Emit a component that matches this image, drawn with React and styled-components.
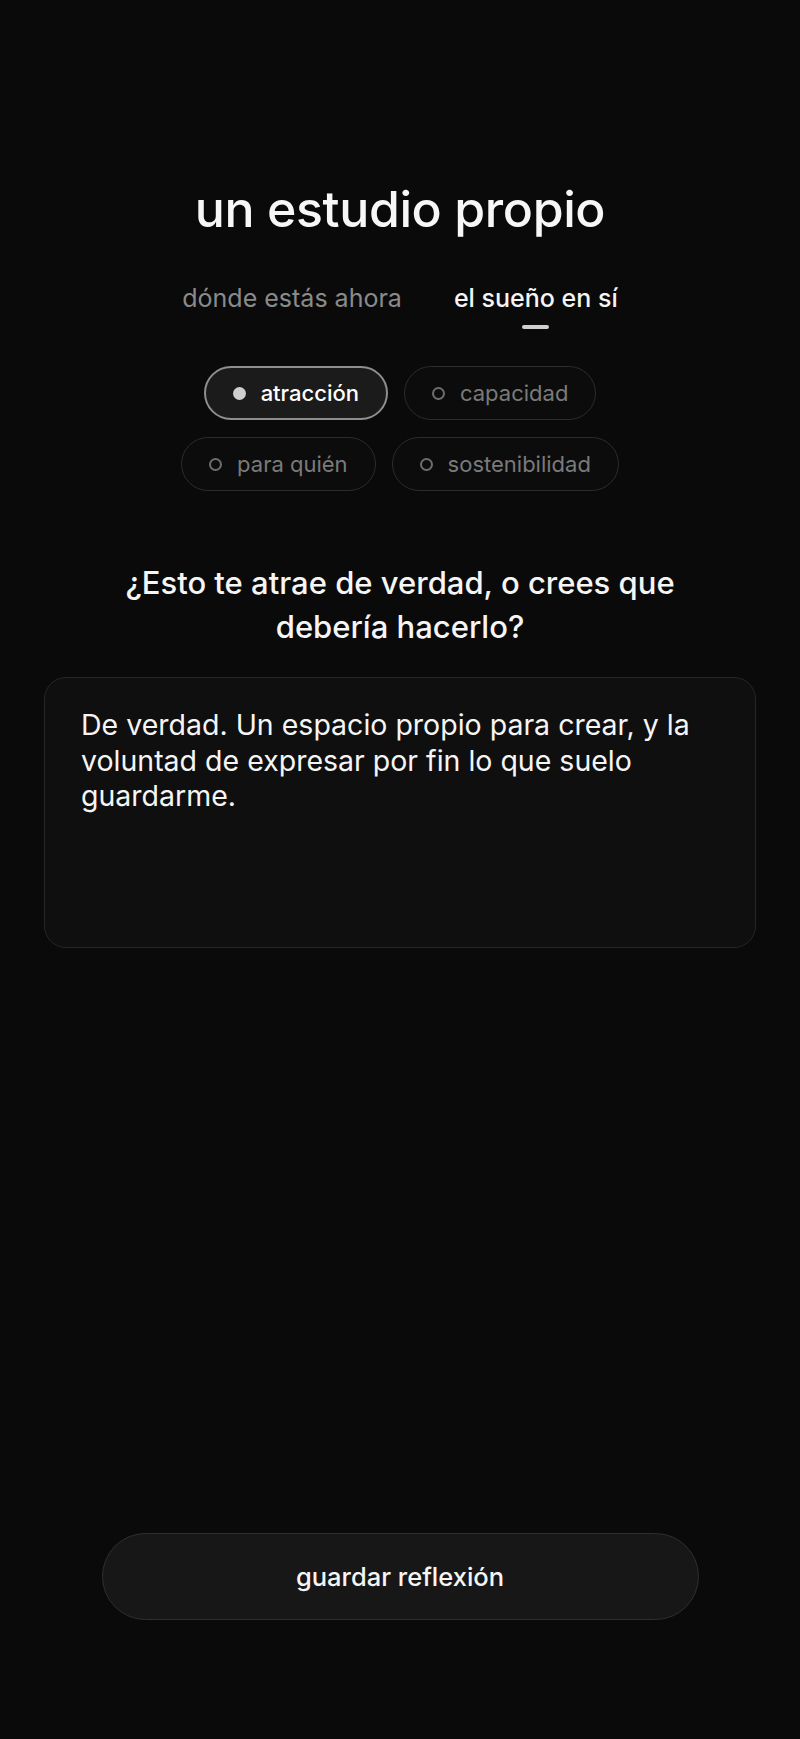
import React, { useState } from 'react';
import styled, { createGlobalStyle } from 'styled-components';

const GlobalStyle = createGlobalStyle`
    html, body {
        margin: 0;
        padding: 0;
        background: #0a0a0a;
    }
    body {
        font-family: Inter, "Noto Sans", sans-serif;
        -webkit-font-smoothing: antialiased;
    }
`;

const Page = styled.div`
    min-height: 100vh;
    box-sizing: border-box;
    display: flex;
    flex-direction: column;
    align-items: center;
    padding: 181px 44px 119px;
    background: #0a0a0a;
    color: #f5f5f5;
`;

const Title = styled.h1`
    margin: 0;
    font-size: 50px;
    line-height: 56px;
    font-weight: 500;
    letter-spacing: -0.4px;
    color: #f7f7f7;
`;

const Tabs = styled.div`
    display: flex;
    gap: 52px;
    margin-top: 46px;
`;

const Tab = styled.button`
    display: flex;
    flex-direction: column;
    align-items: center;
    gap: 12px;
    background: none;
    border: none;
    padding: 0;
    font-family: inherit;
    font-size: 25px;
    line-height: 30px;
    font-weight: ${(p) => (p.$active ? 500 : 400)};
    color: ${(p) => (p.$active ? '#f5f5f5' : '#8a8a8a')};
    cursor: pointer;

    &::after {
        content: '';
        width: 27px;
        height: 4px;
        border-radius: 2px;
        background: ${(p) => (p.$active ? '#cfcfcf' : 'transparent')};
    }
`;

const ChipWrap = styled.div`
    display: flex;
    flex-wrap: wrap;
    justify-content: center;
    gap: 17px 16px;
    width: 480px;
    margin-top: 37px;
`;

const Chip = styled.button`
    display: flex;
    align-items: center;
    gap: 15px;
    height: 54px;
    box-sizing: border-box;
    padding: 0 27px;
    border-radius: 27px;
    font-family: inherit;
    font-size: 22px;
    font-weight: ${(p) => (p.$active ? 500 : 400)};
    color: ${(p) => (p.$active ? '#ffffff' : '#7a7a7a')};
    background: ${(p) => (p.$active ? '#1b1b1b' : '#0c0c0c')};
    border: ${(p) => (p.$active ? '2px solid #8e8e8e' : '1.5px solid #2c2c2c')};
    cursor: pointer;
`;

const Dot = styled.span`
    width: 13px;
    height: 13px;
    box-sizing: border-box;
    border-radius: 50%;
    background: ${(p) => (p.$filled ? '#cfcfcf' : 'transparent')};
    border: ${(p) => (p.$filled ? 'none' : '2px solid #6e6e6e')};
`;

const Question = styled.h2`
    margin: 70px 0 0;
    max-width: 620px;
    text-align: center;
    font-size: 31px;
    line-height: 44px;
    font-weight: 500;
    color: #f5f5f5;
`;

const Answer = styled.textarea`
    margin-top: 28px;
    width: 100%;
    height: 271px;
    box-sizing: border-box;
    padding: 29px 36px;
    resize: none;
    border-radius: 22px;
    border: 1.5px solid #262626;
    background: #0f0f0f;
    color: #f5f5f5;
    font-family: inherit;
    font-size: 28.5px;
    line-height: 35.5px;
    outline: none;
`;

const Spacer = styled.div`
    flex: 1;
`;

const SaveButton = styled.button`
    width: 597px;
    height: 87px;
    border-radius: 44px;
    border: 1.5px solid #2f2f2f;
    background: #171717;
    color: #f5f5f5;
    font-family: inherit;
    font-size: 25.5px;
    font-weight: 500;
    cursor: pointer;
`;

const chips = [
    { id: 'atraccion', label: 'atracción' },
    { id: 'capacidad', label: 'capacidad' },
    { id: 'quien', label: 'para quién' },
    { id: 'sostenibilidad', label: 'sostenibilidad' },
];

const App = () => {
    const [tab, setTab] = useState(1);
    const [chip, setChip] = useState('atraccion');
    const [text, setText] = useState(
        'De verdad. Un espacio propio para crear, y la voluntad de expresar por fin lo que suelo guardarme.'
    );

    return (
        <>
            <GlobalStyle />
            <Page>
                <Title>un estudio propio</Title>
                <Tabs>
                    <Tab $active={tab === 0} onClick={() => setTab(0)}>dónde estás ahora</Tab>
                    <Tab $active={tab === 1} onClick={() => setTab(1)}>el sueño en sí</Tab>
                </Tabs>
                <ChipWrap>
                    {chips.map((c) => (
                        <Chip key={c.id} $active={chip === c.id} onClick={() => setChip(c.id)}>
                            <Dot $filled={chip === c.id} />
                            {c.label}
                        </Chip>
                    ))}
                </ChipWrap>
                <Question>¿Esto te atrae de verdad, o crees que debería hacerlo?</Question>
                <Answer value={text} onChange={(e) => setText(e.target.value)} />
                <Spacer />
                <SaveButton>guardar reflexión</SaveButton>
            </Page>
        </>
    );
};

export default App;
